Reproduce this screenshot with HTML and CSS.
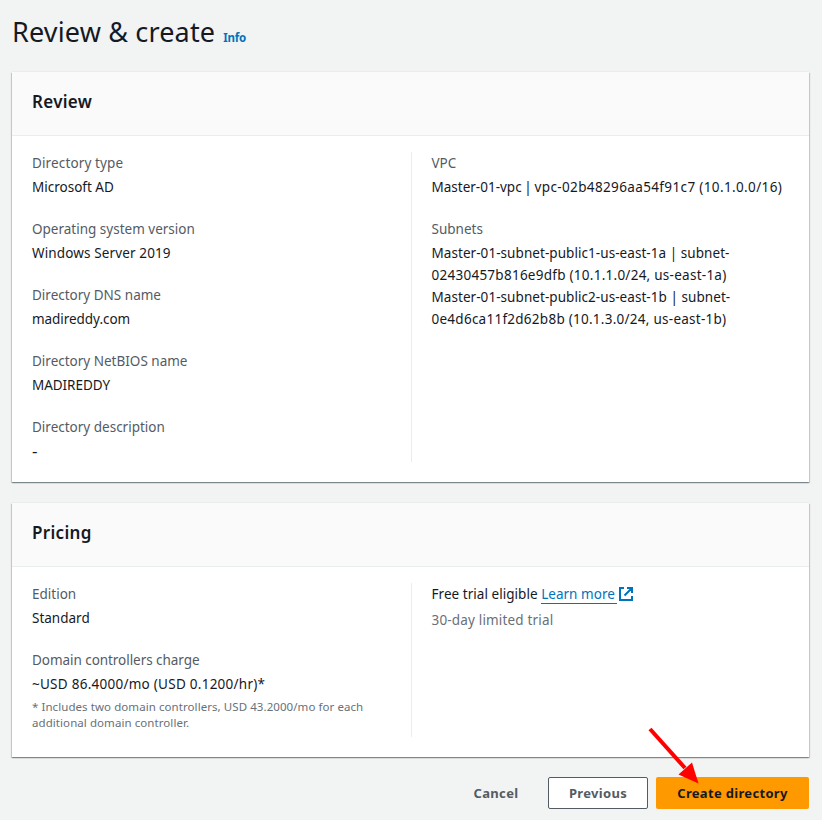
FILE: index.html
```html
<!DOCTYPE html>
<html lang="en">
<head>
<meta charset="utf-8">
<title>Review &amp; create</title>
<link rel="stylesheet" href="styles.css">
</head>
<body>
<main class="page">
  <header class="page-header">
    <h1>Review &amp; create</h1>
    <a class="info">Info</a>
  </header>

  <section class="card">
    <div class="card-header"><h2>Review</h2></div>
    <div class="columns">
      <div class="column">
        <div class="field"><div class="label spaced">Directory type</div><div class="value">Microsoft AD</div></div>
        <div class="field"><div class="label">Operating system version</div><div class="value spaced">Windows Server 2019</div></div>
        <div class="field"><div class="label">Directory DNS name</div><div class="value snug">madireddy.com</div></div>
        <div class="field"><div class="label">Directory NetBIOS name</div><div class="value snug">MADIREDDY</div></div>
        <div class="field"><div class="label">Directory description</div><div class="value dash">-</div></div>
      </div>
      <div class="column">
        <div class="field"><div class="label">VPC</div><div class="value"><span class="vpc-name">Master-01-vpc | </span><span class="vpc-id">vpc-02b48296aa54f91c7 (10.1.0.0/16)</span></div></div>
        <div class="field"><div class="label">Subnets</div>
          <div class="value"><span class="name">Master-01-subnet-public1-us-east-1a | subnet-</span><br><span class="numeric">02430457b816e9dfb (10.1.1.0/24, us-east-1a)</span></div>
          <div class="value"><span class="name">Master-01-subnet-public2-us-east-1b | subnet-</span><br><span class="numeric">0e4d6ca11f2d62b8b (10.1.3.0/24, us-east-1b)</span></div>
        </div>
      </div>
    </div>
  </section>

  <section class="card">
    <div class="card-header"><h2>Pricing</h2></div>
    <div class="columns pricing">
      <div class="column">
        <div class="field"><div class="label">Edition</div><div class="value">Standard</div></div>
        <div class="field"><div class="label snug">Domain controllers charge</div><div class="value numeric">~USD 86.4000/mo (USD 0.1200/hr)*</div>
          <div class="note">* Includes two domain controllers, USD 43.2000/mo for each<br>additional domain controller.</div>
        </div>
      </div>
      <div class="column">
        <div class="trial">Free trial eligible <a class="link">Learn more</a><svg class="external" width="16" height="16" viewBox="0 0 16 16"><path d="M6 2H2v12h12v-4M9 2h5v5M14 2 6.5 9.5"/></svg></div>
        <div class="trial-note">30-day limited trial</div>
      </div>
    </div>
  </section>

  <footer class="actions">
    <button class="button cancel">Cancel</button>
    <button class="button previous">Previous</button>
    <button class="button create">Create directory</button>
    <svg class="arrow" width="52" height="58" viewBox="0 0 52 58"><path class="shaft" d="M2 2 37 41"/><path class="head" d="M44 35.500 30.500 47.500 50.500 56.500Z"/></svg>
  </footer>
</main>
</body>
</html>
```
FILE: styles.css
```css
* { box-sizing: border-box; }
body {
  margin: 0;
  height: 820px;
  overflow: hidden;
  background: #f2f3f3;
  color: #16191f;
  font: 13.5px/22px "Noto Sans", sans-serif;
  white-space: nowrap;
}
.page { padding: 14px 13px 0 12px; }
.page-header { display: flex; align-items: baseline; gap: 8px; height: 58px; }
h1 { margin: 0; font-size: 27px; font-weight: 400; line-height: 36px; letter-spacing: .16px; }
.info { color: #0073bb; font-size: 11.5px; font-weight: 700; line-height: 16px; letter-spacing: -.2px; }
.card {
  margin-bottom: 21px;
  background: #fff;
  box-shadow: 0 1px 1px rgba(0, 28, 36, .3), 1px 1px 1px rgba(0, 28, 36, .15), -1px 1px 1px rgba(0, 28, 36, .15), 0 -1px 0 #eaeded;
}
.card-header { height: 64px; padding: 19px 20px; background: #fafafa; border-bottom: 1px solid #eaeded; }
h2 { margin: 0; font-size: 17px; font-weight: 600; line-height: 22px; letter-spacing: .3px; }
.columns { display: grid; grid-template-columns: 400px 1fr; padding: 16px 0 20px; height: 346px; }
.columns.pricing { height: 190px; }
.column { display: flex; flex-direction: column; gap: 20px; padding-left: 20px; }
.column + .column { padding-left: 19.5px; margin-left: -1px; border-left: 1px solid #eaeded; }
.label { color: #545b64; margin-bottom: 2px; }
.spaced { letter-spacing: .13px; }
.snug { letter-spacing: -.05px; }
.name { letter-spacing: .06px; }
.numeric { letter-spacing: .26px; }
.vpc-name { letter-spacing: 0; word-spacing: -.8px; }
.vpc-id { letter-spacing: .37px; }
.dash { font-size: 17px; }
.note { margin-top: 4px; color: #687078; font-size: 11.5px; line-height: 16px; letter-spacing: .07px; }
.pricing .column + .column { gap: 4px; }
.link { color: #0073bb; border-bottom: 1px solid #0073bb; padding-right: 2px; }
.external { vertical-align: -3px; margin-left: 1px; fill: none; stroke: #0073bb; stroke-width: 2; }
.trial { height: 22px; letter-spacing: .04px; }
.trial-note { color: #687078; letter-spacing: .17px; }
.actions { position: relative; display: flex; justify-content: flex-end; margin-top: -1px; gap: 8px; }
.button {
  height: 32px;
  padding: 0;
  border: 1px solid transparent;
  border-radius: 2px;
  background: transparent;
  color: #545b64;
  font: 700 13px/22px "Noto Sans", sans-serif;
  letter-spacing: .32px;
}
.cancel { width: 88px; }
.previous { width: 100px; background: #fff; border-color: #545b64; }
.create { width: 153px; background: #ff9900; color: #16191f; }
.arrow { position: absolute; right: 109px; top: -50px; }
.shaft { stroke: #f00; stroke-width: 4; }
.head { fill: #f00; }
```
